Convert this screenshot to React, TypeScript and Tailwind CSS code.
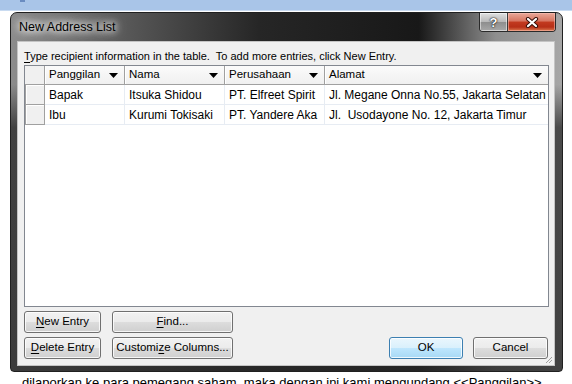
import React from "react";

const ui = "font-['Liberation_Sans','Noto_Sans',sans-serif]";

const cols = [
  { label: "Panggilan", w: "w-[80px]" },
  { label: "Nama", w: "w-[100px]" },
  { label: "Perusahaan", w: "w-[100px]" },
  { label: "Alamat", w: "w-[223px]" },
];

const rows = [
  ["Bapak", "Itsuka Shidou", "PT. Elfreet Spirit", "Jl. Megane Onna No.55, Jakarta Selatan"],
  ["Ibu", "Kurumi Tokisaki", "PT. Yandere Aka", "Jl.  Usodayone No. 12, Jakarta Timur"],
];

function Arrow() {
  return (
    <svg width="9" height="5" viewBox="0 0 9 5" className="shrink-0">
      <path d="M0 0h9L4.5 5z" fill="#000" />
    </svg>
  );
}

function Btn({ children, w, primary }: { children: React.ReactNode; w: string; primary?: boolean }) {
  return (
    <button
      className={
        w +
        " h-[22px] rounded-[3px] border text-[11.5px] text-black flex items-center justify-center shadow-[inset_0_0_0_1px_rgba(255,255,255,0.8)] " +
        (primary
          ? "border-[#3c7fb1] bg-[linear-gradient(180deg,#eaf6fd_0%,#d9f0fc_50%,#bee6fd_51%,#a7d9f5_100%)]"
          : "border-[#707070] bg-[linear-gradient(180deg,#f2f2f2_0%,#ebebeb_50%,#dddddd_51%,#cfcfcf_100%)]")
      }
    >
      {children}
    </button>
  );
}

export default function App() {
  return (
    <div className={"w-[572px] h-[384px] overflow-hidden bg-white flex flex-col " + ui}>
      {/* top strip behind the dialog */}
      <div className="h-[11px] shrink-0 bg-[#a9c5e8] border-b border-[#c9dbf1] relative">
        <div className="absolute left-[20px] top-0 w-[5px] h-[2px] bg-[#6a8cc0]" />
      </div>

      {/* dialog */}
      <div className="ml-[10px] mt-[1px] w-[553px] h-[360px] shrink-0 rounded-t-[7px] rounded-b-[4px] border border-[#202020] flex flex-col overflow-hidden bg-[linear-gradient(180deg,rgba(0,0,0,0)_0%,rgba(0,0,0,0)_20%,rgba(35,35,35,0.7)_32%,rgba(40,40,40,0.8)_100%),linear-gradient(90deg,#8c8c8c_0%,#5e5e5e_18%,#262626_45%,#181818_74%,#8e8e8e_88%,#a6a6a6_100%)]">
        {/* title bar */}
        <div className="h-[28px] shrink-0 flex items-start justify-between">
          <div className="pl-[8px] pt-[6px] text-[12.5px] leading-[16px] text-black [text-shadow:0_0_6px_#fff,0_0_10px_#fff,0_0_14px_#fff]">
            New Address List
          </div>
          <div className="flex mr-[6px] h-[19px] rounded-b-[4px] border border-t-0 border-[#2a2a2a] overflow-hidden">
            <div className="w-[28px] h-full flex items-center justify-center border-r border-[#3a3a3a] bg-[linear-gradient(180deg,#e0e0e0_0%,#b8b8b8_48%,#8e8e8e_52%,#a8a8a8_100%)] shadow-[inset_0_0_0_1px_rgba(255,255,255,0.5)]">
              <span className="text-white font-bold text-[13px] leading-none [text-shadow:0_0_2px_#000,0_0_1px_#000]">?</span>
            </div>
            <div className="w-[47px] h-full flex items-center justify-center bg-[linear-gradient(180deg,#e9a898_0%,#d77560_45%,#c23a1f_50%,#b72f17_78%,#dc7a50_100%)] shadow-[inset_0_0_0_1px_rgba(255,200,190,0.5)]">
              <svg width="14" height="11" viewBox="0 0 14 11">
                <path d="M3 2l8 7M11 2l-8 7" stroke="#3a1008" strokeWidth="4.2" strokeLinecap="round" />
                <path d="M3 2l8 7M11 2l-8 7" stroke="#fff" strokeWidth="2.2" strokeLinecap="round" />
              </svg>
            </div>
          </div>
        </div>

        {/* frame + client */}
        <div className="flex-1 flex pl-[6px] pr-[7px] pb-[5px]">
          <div className="flex-1 bg-[#f0f0f0] border border-[#c4c4c4] flex flex-col relative">
            <div className="pl-[6px] pt-[7px] h-[23px] text-[11px] leading-[14px] text-black">
              <span className="underline underline-offset-2">T</span>ype recipient information in the table.&nbsp; To add more entries, click New Entry.
            </div>

            {/* table */}
            <div className="ml-[6px] w-[525px] h-[242px] border border-[#828790] bg-white flex flex-col">
              <div className="flex h-[19px] border-b border-[#a0a0a0] bg-[linear-gradient(180deg,#fbfbfb_0%,#f0f0f0_100%)]">
                <div className="w-[20px] border-r border-[#a0a0a0] bg-[#f0f0f0]" />
                {cols.map((c) => (
                  <div
                    key={c.label}
                    className={c.w + " flex items-center justify-between pl-[4px] pr-[6px] border-r border-[#a0a0a0] last:border-r-0 shadow-[inset_1px_0_0_#fff] text-[11.5px] text-black"}
                  >
                    <span>{c.label}</span>
                    <Arrow />
                  </div>
                ))}
              </div>
              {rows.map((r, i) => (
                <div key={i} className="flex h-[20px]">
                  <div className="w-[20px] border border-t-0 border-[#a0a0a0] bg-[#f0f0f0] shadow-[inset_1px_1px_0_#fff]" />
                  {r.map((cell, j) => (
                    <div
                      key={j}
                      className={cols[j].w + " pl-[4px] flex items-center border-b border-r border-[#e7ecf3] last:border-r-0 text-[12px] text-black whitespace-pre"}
                    >
                      {cell}
                    </div>
                  ))}
                </div>
              ))}
            </div>

            {/* buttons */}
            <div className="pl-[6px] pr-[6px] mt-[4px] flex flex-col gap-[4px]">
              <div className="flex gap-[11px]">
                <Btn w="w-[77px]">
                  <span className="underline underline-offset-2">N</span>ew Entry
                </Btn>
                <Btn w="w-[121px]">
                  <span className="underline underline-offset-2">F</span>ind...
                </Btn>
              </div>
              <div className="flex gap-[11px]">
                <Btn w="w-[77px]">
                  <span className="underline underline-offset-2">D</span>elete Entry
                </Btn>
                <Btn w="w-[121px]">
                  Customi<span className="underline underline-offset-2">z</span>e Columns...
                </Btn>
                <div className="ml-auto flex gap-[10px]">
                  <Btn w="w-[74px]" primary>
                    OK
                  </Btn>
                  <Btn w="w-[75px]">Cancel</Btn>
                </div>
              </div>
            </div>

            {/* resize grip */}
            <svg width="8" height="8" viewBox="0 0 8 8" className="absolute right-[1px] bottom-[1px]">
              <path d="M7 1L1 7M7 4L4 7" stroke="#a0a0a0" strokeWidth="1" />
            </svg>
          </div>
        </div>
      </div>

      <div className="pl-[22px] pt-[3px] text-[13px] leading-[16px] text-black whitespace-nowrap">
        dilaporkan ke para pemegang saham, maka dengan ini kami mengundang &lt;&lt;Panggilan&gt;&gt;
      </div>
    </div>
  );
}
